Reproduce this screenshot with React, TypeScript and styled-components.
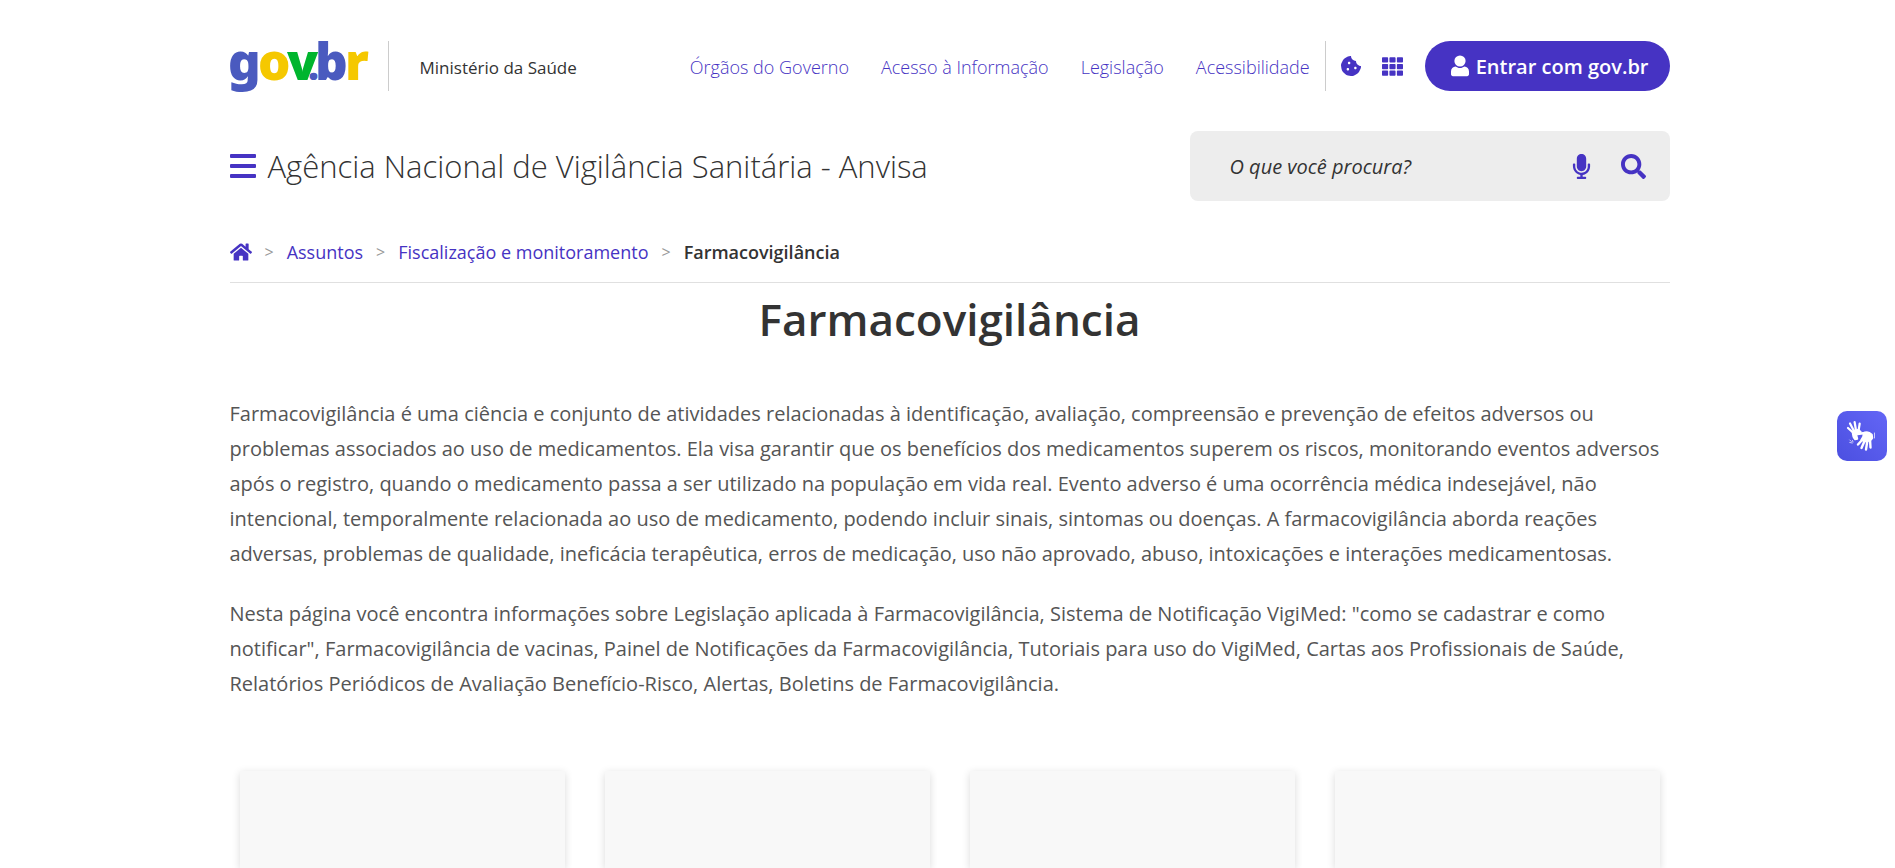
import React from 'react';
import styled, { createGlobalStyle } from 'styled-components';
import {
  FaCookieBite,
  FaHome,
  FaMicrophone,
  FaSearch,
  FaTh,
} from 'react-icons/fa';

const purple = '#4633c3';
const ink = '#333';

const GlobalStyle = createGlobalStyle`
  *, *::before, *::after { box-sizing: border-box; }
  body {
    margin: 0;
    background: #fff;
    color: ${ink};
    font-family: 'Open Sans', 'Noto Sans', sans-serif;
    font-size: 18px;
  }
  h1, p, ul, ol { margin: 0; padding: 0; }
  ul, ol { list-style: none; }
  a { color: ${purple}; text-decoration: none; }
  svg { display: block; flex: none; }
`;

const Page = styled.div`
  min-height: 100vh;
  padding: 41px 20px 0 24px;
  display: flex;
  flex-direction: column;
`;

const Container = styled.div`
  width: 100%;
  max-width: 1440px;
  margin: 0 auto;
  flex: 1;
  display: flex;
  flex-direction: column;
`;

const TopBar = styled.header`
  min-height: 50px;
  display: flex;
  align-items: center;
`;

const Divider = styled.span<{ $before: number; $after: number }>`
  width: 1px;
  height: 50px;
  background: #ccc;
  margin: 0 ${(p) => p.$after}px 0 ${(p) => p.$before}px;
`;

const Ministry = styled.a`
  padding-top: 2px;
  color: ${ink};
  font-size: 17px;
`;

const LinkList = styled.ul`
  margin-left: auto;
  padding-top: 2px;
  display: flex;
  gap: 32px;
  font-weight: 300;
`;

const IconButton = styled.button`
  border: 0;
  padding: 0;
  background: none;
  color: ${purple};
  display: flex;
  cursor: pointer;
`;

const Shortcuts = styled.div`
  display: flex;
  align-items: center;
  gap: 21px;
  margin-right: 22px;
`;

const SignIn = styled.button`
  height: 50px;
  padding: 0 21px 0 26px;
  border: 0;
  border-radius: 25px;
  background: ${purple};
  color: #fff;
  font: 600 20px 'Open Sans', sans-serif;
  display: flex;
  align-items: center;
  gap: 7px;
  cursor: pointer;
`;

const SiteBar = styled.div`
  min-height: 70px;
  margin-top: 40px;
  display: flex;
  align-items: center;
  gap: 12px;
`;

const SiteName = styled.a`
  color: ${ink};
  font-size: 31px;
  font-weight: 300;
  line-height: 40px;
`;

const SearchForm = styled.form`
  width: 480px;
  height: 70px;
  margin-left: auto;
  padding: 0 24px 0 40px;
  border-radius: 8px;
  background: #ededed;
  display: flex;
  align-items: center;
  gap: 27px;
`;

const SearchInput = styled.input`
  flex: 1;
  min-width: 0;
  height: 40px;
  padding: 0;
  border: 0;
  outline: 0;
  background: none;
  color: ${ink};
  font: 400 20px 'Open Sans', sans-serif;
  &::placeholder {
    color: ${ink};
    font-style: italic;
    opacity: 1;
  }
`;

const Breadcrumb = styled.nav`
  margin-top: 30px;
  padding-bottom: 9px;
  border-bottom: 1px solid #e0e0e0;
`;

const Crumbs = styled.ol`
  min-height: 42px;
  display: flex;
  align-items: center;
`;

const Crumb = styled.li<{ $current?: boolean }>`
  display: flex;
  align-items: center;
  font-weight: ${(p) => (p.$current ? 600 : 400)};
  li + &::before {
    content: '>';
    margin: 0 13px;
    color: #999;
    font-size: 16px;
    font-weight: 400;
  }
`;

const Heading = styled.h1`
  margin-top: 4px;
  font-size: 44px;
  font-weight: 600;
  line-height: 64px;
  text-align: center;
`;

const Article = styled.article`
  margin-top: 45px;
  display: flex;
  flex-direction: column;
  gap: 25px;
  color: #555;
  font-size: 20px;
  line-height: 35px;
`;

const Cards = styled.div`
  flex: 1;
  margin-top: 70px;
  padding: 0 10px;
  display: grid;
  grid-template-columns: repeat(4, 1fr);
  gap: 40px;
`;

const Card = styled.div`
  min-height: 96px;
  background: #f8f8f8;
  box-shadow: 0 2px 8px rgba(0, 0, 0, 0.15);
  clip-path: inset(-8px -8px 0 -8px);
`;

const SignLanguage = styled.button`
  position: fixed;
  right: 8px;
  top: calc(50% - 23px);
  width: 50px;
  height: 50px;
  padding: 0;
  border: 0;
  border-radius: 10px;
  background: linear-gradient(45deg, #4b4fe0, #6366f6);
  cursor: pointer;
`;

const GovLogo = () => (
  <svg width="138" height="50" viewBox="0 0 138 50" role="img" aria-label="gov.br" overflow="visible">
    <text y="39" fontFamily="'Noto Sans', sans-serif" fontWeight="900" fontSize="51">
      <tspan x="-2" fill="#4a5abf">g</tspan>
      <tspan x="28" fill="#f5c800">o</tspan>
      <tspan x="57" fill="#00b52e">v</tspan>
      <tspan x="78" fill="#4a5abf" fontSize="38">.</tspan>
      <tspan x="85" fill="#4a5abf">b</tspan>
      <tspan x="115" fill="#f5c800">r</tspan>
    </text>
  </svg>
);

const MenuIcon = () => (
  <svg width="26" height="24" viewBox="0 0 26 24" fill="currentColor" aria-hidden="true">
    <rect y="0" width="26" height="4" rx="1" />
    <rect y="10" width="26" height="4" rx="1" />
    <rect y="20" width="26" height="4" rx="1" />
  </svg>
);

const UserIcon = () => (
  <svg width="18" height="22" viewBox="0 0 18 22" fill="currentColor" aria-hidden="true">
    <circle cx="9" cy="6" r="5.600" />
    <path d="M4.600 11.400C1.900 11.600 0 13.600 0 16.400v2.900C0 20.400.8 21.200 1.900 21.200h14.200c1.100 0 1.900-.8 1.900-1.900v-2.900c0-2.800-1.900-4.800-4.600-5C12.200 12.300 10.700 12.900 9 12.900s-3.200-.6-4.400-1.500z" />
  </svg>
);

const HandsIcon = () => (
  <svg width="50" height="50" viewBox="0 0 50 50" fill="none" stroke="#fff" strokeLinecap="round" strokeLinejoin="round" aria-hidden="true">
    <path d="M16.500 22 11 17M17 20 13 12.500M19 19.500 17.600 11M21.500 20 22.700 12.500" strokeWidth="2.200" />
    <path d="M15.500 21 21.500 18.500 24 21 19.500 24 20.500 28 18 28.500Q15.500 26 15.500 21Z" fill="#fff" strokeWidth="1.500" />
    <path d="M20.500 23 28 22M26 28 21 33.500M28 29 24.500 37M30.500 29 29 38.500M33 28 33.500 36.500" strokeWidth="2.400" />
    <path d="M26.500 22Q31 19.500 35 23.500L35.500 27Q34 30.500 28 30.500L24 29 26 25.500Z" fill="#fff" strokeWidth="1.500" />
    <path d="M37.500 22v5M12.800 29l1.500 1.500M12.800 31.500l2.500.500M15.500 29.500l.5 1.500" strokeWidth="1" opacity=".7" />
  </svg>
);

const governmentLinks = [
  'Órgãos do Governo',
  'Acesso à Informação',
  'Legislação',
  'Acessibilidade',
];

export default function App() {
  return (
    <Page>
      <GlobalStyle />
      <Container>
        <TopBar>
          <a href="#govbr"><GovLogo /></a>
          <Divider $before={20} $after={31} />
          <Ministry href="#ministerio">Ministério da Saúde</Ministry>
          <LinkList>
            {governmentLinks.map((label) => (
              <li key={label}><a href="#governo">{label}</a></li>
            ))}
          </LinkList>
          <Divider $before={15} $after={15} />
          <Shortcuts>
            <IconButton aria-label="Gerenciar cookies"><FaCookieBite size={20} /></IconButton>
            <IconButton aria-label="Sistemas"><FaTh size={21} /></IconButton>
          </Shortcuts>
          <SignIn><UserIcon />Entrar com gov.br</SignIn>
        </TopBar>

        <SiteBar>
          <IconButton aria-label="Menu"><MenuIcon /></IconButton>
          <SiteName href="#anvisa">Agência Nacional de Vigilância Sanitária - Anvisa</SiteName>
          <SearchForm role="search">
            <SearchInput type="text" aria-label="Buscar" placeholder="O que você procura?" />
            <IconButton type="button" aria-label="Busca por voz"><FaMicrophone size={25} /></IconButton>
            <IconButton type="button" aria-label="Buscar no portal"><FaSearch size={25} /></IconButton>
          </SearchForm>
        </SiteBar>

        <Breadcrumb aria-label="Você está aqui">
          <Crumbs>
            <Crumb><a href="#inicio" aria-label="Página inicial"><FaHome size={22} /></a></Crumb>
            <Crumb><a href="#assuntos">Assuntos</a></Crumb>
            <Crumb><a href="#fiscalizacao">Fiscalização e monitoramento</a></Crumb>
            <Crumb $current aria-current="page">Farmacovigilância</Crumb>
          </Crumbs>
        </Breadcrumb>

        <Heading>Farmacovigilância</Heading>

        <Article>
          <p>
            Farmacovigilância é uma ciência e conjunto de atividades relacionadas à identificação, avaliação, compreensão e prevenção de efeitos adversos ou problemas associados ao uso de medicamentos. Ela visa garantir que os benefícios dos medicamentos superem os riscos, monitorando eventos adversos após o registro, quando o medicamento passa a ser utilizado na população em vida real. Evento adverso é uma ocorrência médica indesejável, não intencional, temporalmente relacionada ao uso de medicamento, podendo incluir sinais, sintomas ou doenças. A farmacovigilância aborda reações adversas, problemas de qualidade, ineficácia terapêutica, erros de medicação, uso não aprovado, abuso, intoxicações e interações medicamentosas.
          </p>
          <p>
            Nesta página você encontra informações sobre Legislação aplicada à Farmacovigilância, Sistema de Notificação VigiMed: "como se cadastrar e como notificar", Farmacovigilância de vacinas, Painel de Notificações da Farmacovigilância, Tutoriais para uso do VigiMed, Cartas aos Profissionais de Saúde, Relatórios Periódicos de Avaliação Benefício-Risco, Alertas, Boletins de Farmacovigilância.
          </p>
        </Article>

        <Cards>
          <Card />
          <Card />
          <Card />
          <Card />
        </Cards>
      </Container>
      <SignLanguage aria-label="Conteúdo acessível em Libras"><HandsIcon /></SignLanguage>
    </Page>
  );
}
